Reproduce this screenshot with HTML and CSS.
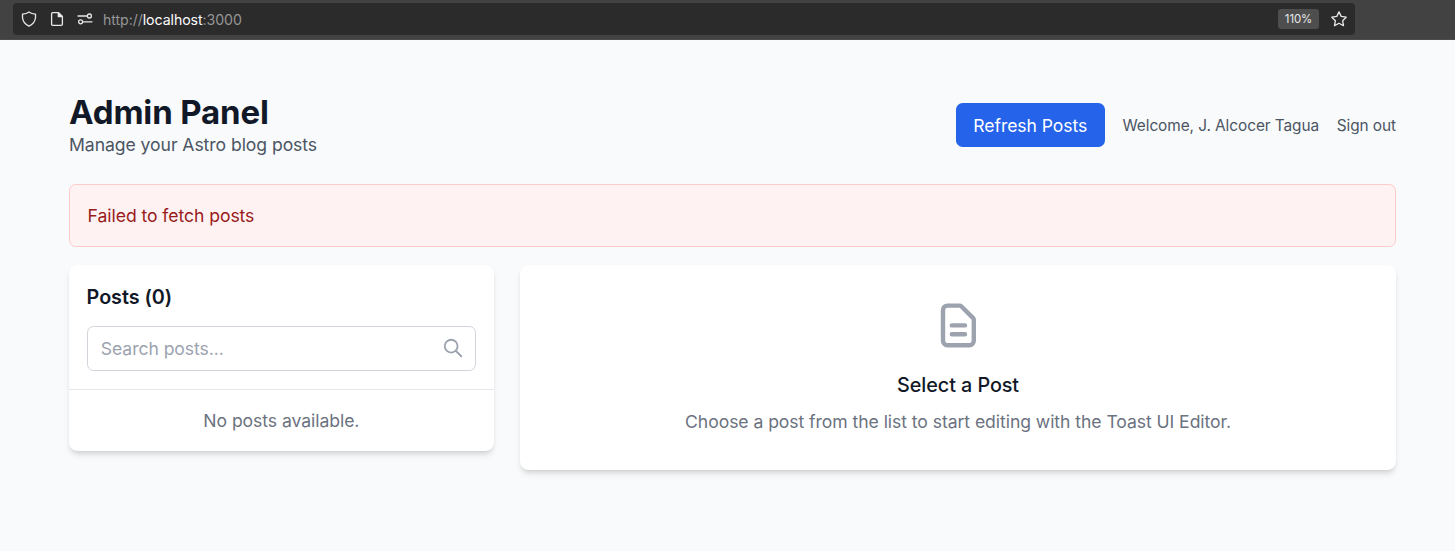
FILE: index.html
```html
<!DOCTYPE html>
<html lang="en">
<head>
<meta charset="utf-8">
<title>Admin Panel</title>
<link rel="stylesheet" href="styles.css">
</head>
<body>
<div class="toolbar">
  <div class="urlbar">
    <svg class="bar-icon" viewBox="0 0 16 16"><path d="M8 .9C6.300 2.200 4 2.900 1.500 3.200V6.500C1.800 10.500 4.300 13.500 8 15.100C11.700 13.500 14.200 10.500 14.500 6.500V3.200C12 2.900 9.700 2.200 8 .9Z"/></svg>
    <svg class="bar-icon" viewBox="0 0 16 16"><path d="M3.700 1.600H9.500L13.400 5.500V13.300Q13.400 14.400 12.300 14.400H3.700Q2.600 14.400 2.600 13.300V2.700Q2.600 1.600 3.700 1.600Z"/><path class="solid" d="M9.300 1.600V5.700H13.400Z"/></svg>
    <svg class="bar-icon" viewBox="0 0 16 16"><path d="M1 5H9.500M6.500 10.800H15"/><circle cx="12.400" cy="5" r="2"/><circle cx="3.600" cy="10.800" r="2"/></svg>
    <span class="url">http://<span class="host">localhost</span>:3000</span>
    <span class="zoom">110%</span>
    <svg class="bar-icon star" viewBox="0 0 16 16"><path d="M8 .9L10.200 5.400L15.200 6.200L11.600 9.700L12.500 14.700L8 12.300L3.500 14.700L4.400 9.700L.8 6.200L5.800 5.400Z"/></svg>
  </div>
</div>
<main class="page">
  <header class="header">
    <div>
      <h1 class="title">Admin Panel</h1>
      <p class="subtitle">Manage your Astro blog posts</p>
    </div>
    <div class="actions">
      <button class="refresh">Refresh Posts</button>
      <span>Welcome, J. Alcocer Tagua</span>
      <span>Sign out</span>
    </div>
  </header>
  <div class="alert">Failed to fetch posts</div>
  <div class="grid">
    <section class="card">
      <div class="card-head">
        <h2 class="card-title">Posts (0)</h2>
        <div class="search">
          <span>Search posts...</span>
          <svg class="search-icon" viewBox="0 0 24 24"><path d="M21 21l-6-6m2-5a7 7 0 11-14 0 7 7 0 0114 0z"/></svg>
        </div>
      </div>
      <div class="empty">No posts available.</div>
    </section>
    <section class="card editor">
      <svg class="doc-icon" viewBox="0 0 24 24"><path d="M9 12h6m-6 4h6m2 5H7a2 2 0 01-2-2V5a2 2 0 012-2h5.586a1 1 0 01.707.293l5.414 5.414a1 1 0 01.293.707V19a2 2 0 01-2 2z"/></svg>
      <h3 class="editor-title">Select a Post</h3>
      <p class="editor-text">Choose a post from the list to start editing with the Toast UI Editor.</p>
    </section>
  </div>
</main>
</body>
</html>
```
FILE: styles.css
```css
* { box-sizing: border-box; margin: 0; padding: 0; }
body {
  min-height: 551px;
  background: #f9fafb;
  font-family: Inter, "Liberation Sans", sans-serif;
  font-size: 17.6px;
  line-height: 26.4px;
  letter-spacing: -.066px;
  color: #111827;
}
svg { display: block; fill: none; stroke: currentColor; stroke-linecap: round; stroke-linejoin: round; }
.toolbar {
  height: 40px;
  padding: 3px 100px 5px 13px;
  background: #424242;
  border-bottom: 1px solid #4d4d4d;
}
.urlbar {
  display: flex;
  align-items: center;
  height: 32px;
  padding: 0 8px;
  gap: 12px;
  border-radius: 4px;
  background: #2b2b2b;
  color: #e8e8e8;
}
.bar-icon { width: 16px; height: 16px; stroke-width: 1.3; }
.solid { fill: currentColor; }
.url { flex: 1; margin-left: -2px; padding-top: 2px; font-size: 14.15px; line-height: 20px; color: #959595; }
.host { color: #fbfbfe; }
.zoom {
  width: 41px;
  height: 20px;
  border-radius: 3px;
  background: #4e4e4e;
  font-size: 11.4px;
  line-height: 20px;
  text-align: center;
}
.page { padding: 52.6px 59px 0 69px; }
.header {
  display: flex;
  justify-content: space-between;
  align-items: center;
  margin-bottom: 25.4px;
}
.title { font-size: 33px; font-weight: 700; line-height: 39.6px; letter-spacing: -.15px; }
.subtitle { color: #4b5563; }
.actions {
  display: flex;
  align-items: center;
  gap: 17.6px;
  font-size: 15.4px;
  line-height: 22px;
  color: #4b5563;
}
.refresh {
  margin-bottom: 1.2px;
  padding: 10px 17.6px 7.6px;
  border: 0;
  border-radius: 6.6px;
  background: #2563eb;
  color: #fff;
  font: inherit;
  font-size: 17.6px;
  line-height: 26.4px;
  letter-spacing: -.066px;
}
.alert {
  height: 63px;
  margin-bottom: 18px;
  padding: 17.6px;
  border: 1px solid #fecaca;
  border-radius: 6.6px;
  background: #fef2f2;
  color: #991b1b;
}
.grid { display: grid; grid-template-columns: 424.7px 1fr; gap: 26.4px; align-items: start; }
.card {
  border-radius: 8.8px;
  background: #fff;
  box-shadow: 0 4.4px 6.6px -1px rgba(0, 0, 0, .1), 0 2.2px 4.4px -2px rgba(0, 0, 0, .1);
}
.card-head { padding: 16.8px 17.6px 18px; border-bottom: 1px solid #e5e7eb; }
.card-title { margin-bottom: 13.8px; font-size: 19.8px; font-weight: 600; line-height: 30.8px; }
.search {
  display: flex;
  justify-content: space-between;
  align-items: center;
  height: 45px;
  padding: 0 11.2px 0 13.2px;
  border: 1px solid #d1d5db;
  border-radius: 6.6px;
  color: #9ca3af;
}
.search-icon { width: 22px; height: 22px; margin-top: -2px; stroke-width: 2; }
.empty { padding: 17.6px 17.6px 17px; text-align: center; color: #6b7280; }
.editor { padding: 34.2px 35.2px 34.4px; text-align: center; }
.doc-icon { width: 52.8px; height: 52.8px; margin: 0 auto 17.8px; color: #9ca3af; stroke-width: 2; }
.editor-title { margin-bottom: 8.8px; font-size: 19.8px; font-weight: 500; line-height: 30.8px; }
.editor-text { color: #6b7280; }
```
